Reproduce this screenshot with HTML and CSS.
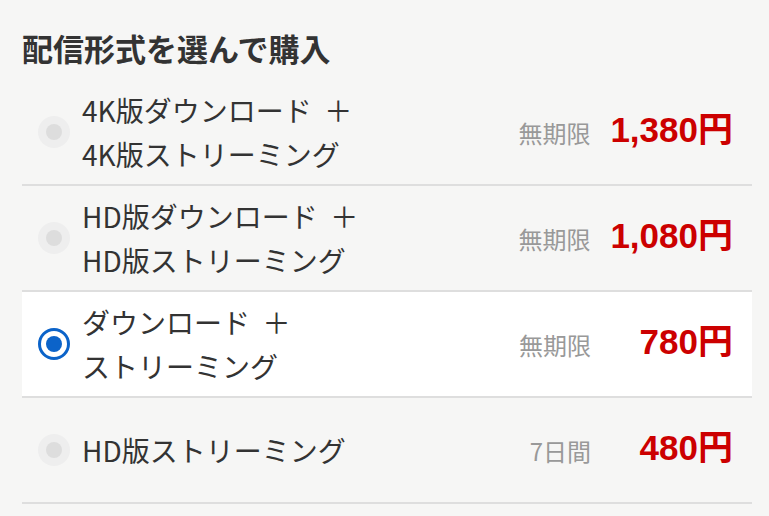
FILE: index.html
```html
<!DOCTYPE html>
<html lang="ja">
<head>
    <meta charset="UTF-8">
    <meta name="viewport" content="width=device-width, initial-scale=1.0">
    <title>配信形式を選んで購入</title>
    <link rel="stylesheet" href="styles.css">
</head>
<body>

    <div class="container">
        <h2 class="title">配信形式を選んで購入</h2>
        <ul class="options">
            <li class="option">
                <span class="radio"></span>
                <span class="name">4K版ダウンロード&nbsp; ＋<br>4K版ストリーミング</span>
                <span class="period">無期限</span>
                <span class="price">1,380円</span>
            </li>
            <li class="option">
                <span class="radio"></span>
                <span class="name">HD版ダウンロード&nbsp; ＋<br>HD版ストリーミング</span>
                <span class="period">無期限</span>
                <span class="price">1,080円</span>
            </li>
            <li class="option selected">
                <span class="radio"></span>
                <span class="name">ダウンロード&nbsp; ＋<br>ストリーミング</span>
                <span class="period">無期限</span>
                <span class="price">780円</span>
            </li>
            <li class="option">
                <span class="radio"></span>
                <span class="name">HD版ストリーミング</span>
                <span class="period">7日間</span>
                <span class="price">480円</span>
            </li>
        </ul>
    </div>

</body>
</html>
```

FILE: styles.css
```css
body {
    font-family: "Noto Sans CJK JP", "Noto Sans", sans-serif;
    background-color: #f6f6f5;
    color: #333;
    margin: 0;
    padding: 0;
}

.container {
    width: 730px;
    padding: 28px 0 0 22px;
}

.title {
    margin: 0 0 12px;
    font-size: 31px;
    line-height: 40px;
    font-weight: bold;
    color: #333;
}

.options {
    list-style: none;
    margin: 0;
    padding: 0;
}

.option {
    display: flex;
    align-items: center;
    min-height: 104px;
    padding: 0 19px 0 16px;
    border-bottom: 2px solid #dedede;
}

.option.selected {
    background: #fff;
}

.radio {
    flex: none;
    width: 32px;
    height: 32px;
    border-radius: 50%;
    background: #eeeeee;
    display: flex;
    align-items: center;
    justify-content: center;
    margin-right: 12px;
    box-sizing: border-box;
}

.radio::after {
    content: "";
    width: 16px;
    height: 16px;
    border-radius: 50%;
    background: #dddddd;
}

.selected .radio {
    background: #fff;
    border: 3px solid #0b63c9;
}

.selected .radio::after {
    background: #0b63c9;
}

.name {
    flex: 1;
    font-size: 28px;
    line-height: 44px;
    color: #333;
}

.period {
    font-size: 24px;
    color: #999;
    margin-right: 20px;
}

.price {
    min-width: 122px;
    text-align: right;
    font-family: "Liberation Sans", "Noto Sans CJK JP", sans-serif;
    font-size: 35px;
    line-height: 40px;
    font-weight: bold;
    color: #cc0000;
    margin-bottom: 4px;
}
```
